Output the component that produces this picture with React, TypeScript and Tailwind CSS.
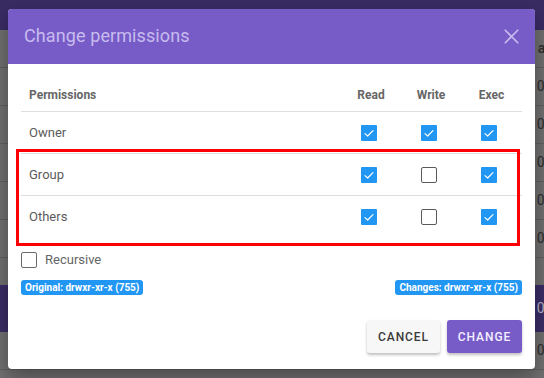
import React from "react";
import { X } from "lucide-react";

function Check({ on }: { on: boolean }) {
  if (on)
    return (
      <div className="w-[16px] h-[16px] rounded-[1px] bg-[#2196f3] flex items-center justify-center">
        <svg width="16" height="16" viewBox="0 0 16 16">
          <path d="M4 8.6 L6.7 11 L12 5.6" fill="none" stroke="#ffffff" strokeWidth="1.2" strokeLinecap="round" strokeLinejoin="round" />
        </svg>
      </div>
    );
  return <div className="w-[16px] h-[16px] rounded-[2px] border-[1.5px] border-[#5a5a5a] bg-white" />;
}

const rows = [
  { name: "Owner", v: [true, true, true] },
  { name: "Group", v: [true, false, true] },
  { name: "Others", v: [true, false, true] },
];

const bgRowCls =
  "h-[38px] shrink-0 border-b border-[#5f5f5f] flex items-center justify-end text-[14px] text-[#2e2e2e]";

export default function App() {
  return (
    <div className="relative w-[544px] h-[378px] overflow-hidden bg-[#707070]" style={{ fontFamily: "Roboto, 'Liberation Sans', sans-serif" }}>
      {/* background app */}
      <div className="flex flex-col">
        <div className="h-[30px] shrink-0 bg-[#392c64]" />
        <div className={bgRowCls + " font-medium"}>
          <span className="translate-x-[6px]">at</span>
        </div>
        {[0, 1, 2, 3, 4].map((i) => (
          <div key={i} className={bgRowCls}>
            <span className="translate-x-[4px]">0:</span>
          </div>
        ))}
        <div className="h-[27px] shrink-0" />
        <div className="h-[47px] shrink-0 bg-[#3b2d66] flex items-center justify-end text-[14px] text-[#b8b8c8]">
          <span className="translate-x-[4px]">0:</span>
        </div>
        <div className={bgRowCls}>
          <span className="translate-x-[4px]">0:</span>
        </div>
      </div>

      {/* dialog */}
      <div className="absolute left-[8px] top-[9px] w-[527px] h-[360px] bg-white rounded-[4px] shadow-[0_8px_20px_rgba(0,0,0,0.35)] flex flex-col">
        <div className="h-[55px] bg-[#775cc8] rounded-t-[4px] flex items-center justify-between pl-[16px] pr-[11px]">
          <span className="text-[18px] text-[#c7bbee] tracking-[0.1px] -translate-y-[1px]">Change permissions</span>
          <X size={25} strokeWidth={1.6} color="#c7bbee" />
        </div>
        <div className="flex flex-col px-[13px] pt-[14px]">
          <div className="grid grid-cols-[1fr_60px_60px_61px] h-[34px] items-center border-b border-[#dedede] text-[12px] font-bold text-[#666666]">
            <span className="pl-[8px]">Permissions</span>
            <span className="text-center">Read</span>
            <span className="text-center">Write</span>
            <span className="text-center">Exec</span>
          </div>
          {rows.map((r, idx) => (
            <div
              key={r.name}
              className={
                idx < 2
                  ? "grid grid-cols-[1fr_60px_60px_61px] h-[42px] items-center border-b border-[#dedede] text-[13px] text-[#5c5c5c]"
                  : "grid grid-cols-[1fr_60px_60px_61px] h-[42px] items-center text-[13px] text-[#5c5c5c]"
              }
            >
              <span className="pl-[8px]">{r.name}</span>
              {r.v.map((on, j) => (
                <div key={j} className="flex justify-center pr-[5px]">
                  <Check on={on} />
                </div>
              ))}
            </div>
          ))}
          <div className="flex items-center gap-[8px] mt-[14px] h-[16px]">
            <div className="w-[16px] h-[16px] rounded-[2px] border-[1.5px] border-[#6a6a6a]" />
            <span className="text-[13px] text-[#666666]">Recursive</span>
          </div>
          <div className="flex justify-between mt-[12px]">
            <span className="h-[15px] px-[4px] rounded-[3px] bg-[#2196f3] text-white text-[10px] font-bold leading-[15px]">Original: drwxr-xr-x (755)</span>
            <span className="h-[15px] px-[4px] rounded-[3px] bg-[#2196f3] text-white text-[10px] font-bold leading-[15px]">Changes: drwxr-xr-x (755)</span>
          </div>
          <div className="flex justify-end gap-[7px] mt-[25px]">
            <button className="w-[73px] h-[33px] rounded-[3px] bg-[#f7f7f7] shadow-[0_2px_3px_rgba(0,0,0,0.25)] text-[12px] font-medium tracking-[0.9px] text-[#3a3a3a]">CANCEL</button>
            <button className="w-[75px] h-[33px] rounded-[3px] bg-[#775cc8] shadow-[0_2px_3px_rgba(0,0,0,0.25)] text-[12px] font-medium tracking-[0.9px] text-[#f4f0ff]">CHANGE</button>
          </div>
        </div>
        {/* annotation box */}
        <div className="absolute left-[8px] top-[140px] w-[504px] h-[97px] border-[3px] border-[#ff0000] pointer-events-none" />
      </div>
    </div>
  );
}
